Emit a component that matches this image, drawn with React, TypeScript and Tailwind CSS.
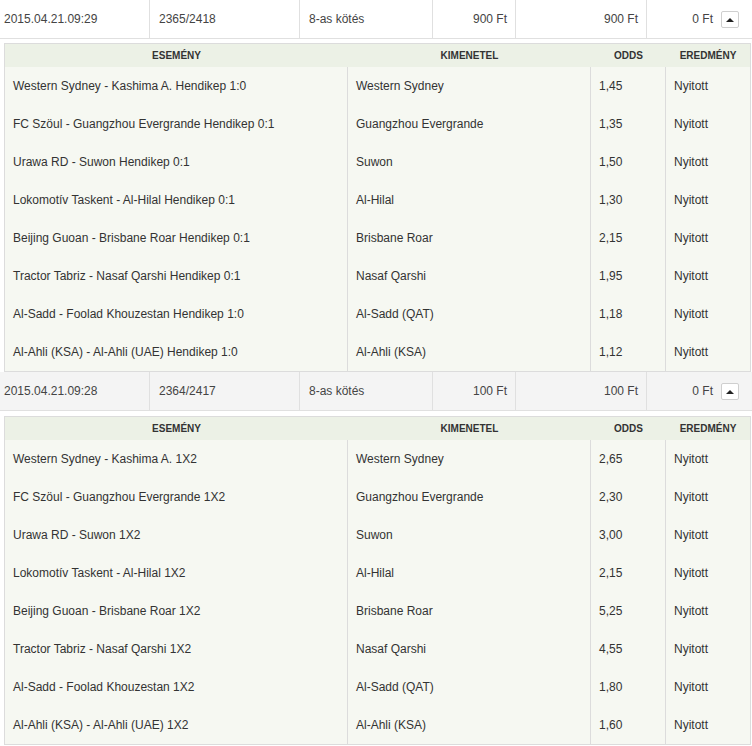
import React from "react";

type Leg = { event: string; outcome: string; odds: string; result: string };
type Bet = {
  date: string;
  id: string;
  type: string;
  stake: string;
  total: string;
  win: string;
  bg: string;
  gap: string;
  legs: Leg[];
};

const matches = [
  ["Western Sydney - Kashima A.", "Western Sydney"],
  ["FC Szöul - Guangzhou Evergrande", "Guangzhou Evergrande"],
  ["Urawa RD - Suwon", "Suwon"],
  ["Lokomotív Taskent - Al-Hilal", "Al-Hilal"],
  ["Beijing Guoan - Brisbane Roar", "Brisbane Roar"],
  ["Tractor Tabriz - Nasaf Qarshi", "Nasaf Qarshi"],
  ["Al-Sadd - Foolad Khouzestan", "Al-Sadd (QAT)"],
  ["Al-Ahli (KSA) - Al-Ahli (UAE)", "Al-Ahli (KSA)"],
];

const hcp = ["1:0", "0:1", "0:1", "0:1", "0:1", "0:1", "1:0", "1:0"];
const odds1 = ["1,45", "1,35", "1,50", "1,30", "2,15", "1,95", "1,18", "1,12"];
const odds2 = ["2,65", "2,30", "3,00", "2,15", "5,25", "4,55", "1,80", "1,60"];

const bets: Bet[] = [
  {
    date: "2015.04.21.09:29",
    id: "2365/2418",
    type: "8-as kötés",
    stake: "900 Ft",
    total: "900 Ft",
    win: "0 Ft",
    bg: "bg-white",
    gap: "pt-[4px]",
    legs: matches.map((m, i) => ({
      event: `${m[0]} Hendikep ${hcp[i]}`,
      outcome: m[1],
      odds: odds1[i],
      result: "Nyitott",
    })),
  },
  {
    date: "2015.04.21.09:28",
    id: "2364/2417",
    type: "8-as kötés",
    stake: "100 Ft",
    total: "100 Ft",
    win: "0 Ft",
    bg: "bg-[#f4f4f4]",
    gap: "pt-[5px]",
    legs: matches.map((m, i) => ({
      event: `${m[0]} 1X2`,
      outcome: m[1],
      odds: odds2[i],
      result: "Nyitott",
    })),
  },
];

function Caret() {
  return (
    <div className="w-[18px] h-[17px] bg-white border border-[#cfcfcf] rounded-[2px] flex items-center justify-center">
      <svg width="8" height="5" viewBox="0 0 8 5">
        <path d="M0 5 L4 1 L8 5 Z" fill="#222" />
      </svg>
    </div>
  );
}

function BetBlock({ bet }: { bet: Bet }) {
  return (
    <div>
      <div
        className={`${bet.bg} grid grid-cols-[150px_150px_133px_83px_131px_1fr] h-[39px] border-b border-[#e0e0e0] text-[12px] text-[#444]`}
      >
        <div className="flex items-center pl-[4px] border-r border-[#e0e0e0]">{bet.date}</div>
        <div className="flex items-center pl-[9px] border-r border-[#e0e0e0]">{bet.id}</div>
        <div className="flex items-center pl-[9px] border-r border-[#e0e0e0]">{bet.type}</div>
        <div className="flex items-center justify-end pr-[8px] border-r border-[#e0e0e0]">{bet.stake}</div>
        <div className="flex items-center justify-end pr-[8px] border-r border-[#e0e0e0]">{bet.total}</div>
        <div className="flex items-center justify-end pr-[13px] gap-[8px]">
          <span>{bet.win}</span>
          <Caret />
        </div>
      </div>
      <div className={`${bet.gap} pl-[4px] pr-[1px]`}>
        <div className="border border-[#dcdcdc] bg-[#f6f8f2]">
          <div className="grid grid-cols-[343px_243px_75px_1fr] h-[23px] bg-[#ecf1e6] text-[10px] font-bold text-[#333] uppercase">
            <div className="flex items-center justify-center">Esemény</div>
            <div className="flex items-center justify-center">Kimenetel</div>
            <div className="flex items-center justify-center">Odds</div>
            <div className="flex items-center justify-center">Eredmény</div>
          </div>
          {bet.legs.map((l, i) => (
            <div
              key={i}
              className="grid grid-cols-[343px_243px_75px_1fr] h-[38px] text-[12px] text-[#333]"
            >
              <div className="flex items-center pl-[8px] border-r border-[#dcdcdc]">{l.event}</div>
              <div className="flex items-center pl-[8px] border-r border-[#dcdcdc]">{l.outcome}</div>
              <div className="flex items-center pl-[8px] border-r border-[#dcdcdc]">{l.odds}</div>
              <div className="flex items-center pl-[8px]">{l.result}</div>
            </div>
          ))}
        </div>
      </div>
    </div>
  );
}

export default function App() {
  return (
    <div className="w-[752px] h-[746px] bg-white overflow-hidden font-['Liberation_Sans',Arial,sans-serif]">
      {bets.map((b, i) => (
        <BetBlock key={i} bet={b} />
      ))}
    </div>
  );
}
